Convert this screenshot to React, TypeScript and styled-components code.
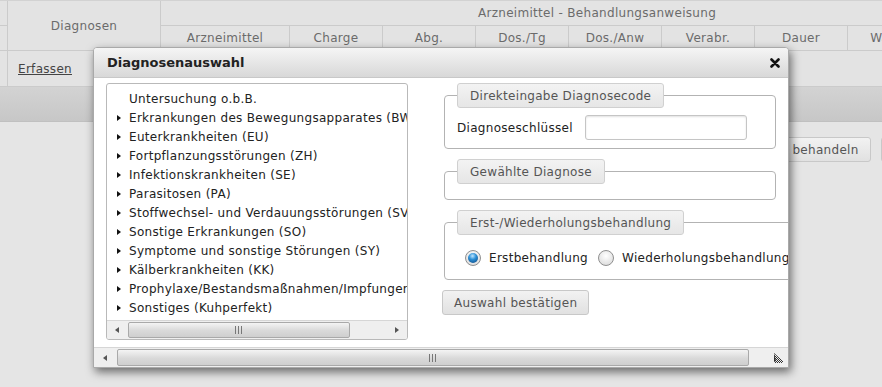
import React from "react";
import styled, { createGlobalStyle } from "styled-components";

const GlobalStyle = createGlobalStyle`
  html, body {
    margin: 0;
    padding: 0;
  }
  body {
    background: #e5e5e5;
    font-family: "DejaVu Sans", Verdana, sans-serif;
    font-size: 12px;
    letter-spacing: 0.3px;
    overflow: hidden;
  }
  * {
    box-sizing: border-box;
  }
`;

const Page = styled.div`
  position: relative;
  width: 882px;
  height: 387px;
  overflow: hidden;
`;

const HeaderGrid = styled.div`
  display: grid;
  grid-template-columns: 8px 153px 129px repeat(8, 93px);
  grid-template-rows: 25px 25px 36px;
  width: max-content;
  background: #e3e3e3;
  border-top: 1px solid #d2d2d2;
  color: #6b6b6b;
`;

const HeadCell = styled.div<{ $col: string; $row: string; $noRight?: boolean }>`
  grid-column: ${(p) => p.$col};
  grid-row: ${(p) => p.$row};
  display: flex;
  align-items: center;
  justify-content: center;
  border-right: ${(p) => (p.$noRight ? "none" : "1px solid #cbcbcb")};
  border-bottom: 1px solid #cbcbcb;
  white-space: nowrap;
`;

const LinkCell = styled(HeadCell)`
  justify-content: flex-start;
  padding-left: 10px;
`;

const Link = styled.a`
  color: #444;
  text-decoration: underline;
  cursor: pointer;
`;

const Toolbar = styled.div`
  height: 35px;
  background: linear-gradient(#d3d3d3, #c7c7c7);
  border-bottom: 1px solid #c0c0c0;
`;

const ActionBar = styled.div`
  display: flex;
  justify-content: flex-end;
  gap: 10px;
  padding-top: 15px;
  margin-right: -90px;
`;

const Button = styled.button`
  height: 25px;
  padding: 0 11px;
  border: 1px solid #c8c8c8;
  border-radius: 3px;
  background: linear-gradient(#f2f2f2, #e1e1e1);
  color: #555;
  font-family: inherit;
  font-size: 12px;
  letter-spacing: 0.3px;
  white-space: nowrap;
  cursor: pointer;
`;

const Dialog = styled.div`
  position: absolute;
  left: 93px;
  top: 47px;
  width: 696px;
  height: 321px;
  display: flex;
  flex-direction: column;
  background: #fff;
  border: 1px solid #a9a9a9;
  border-radius: 4px 4px 0 0;
  box-shadow: 2px 4px 10px rgba(0, 0, 0, 0.55);
  overflow: hidden;
`;

const TitleBar = styled.div`
  height: 30px;
  flex: none;
  display: flex;
  align-items: center;
  justify-content: space-between;
  padding: 0 8px 0 13px;
  background: linear-gradient(#f5f5f5, #d8d8d8);
  border-bottom: 1px solid #c8c8c8;
  color: #222;
  font-size: 13px;
  font-weight: bold;
  letter-spacing: 0;
`;

const CloseButton = styled.span`
  display: flex;
  cursor: pointer;
`;

const Body = styled.div`
  flex: 1;
  overflow: hidden;
`;

const Content = styled.div`
  display: flex;
  align-items: flex-start;
  gap: 36px;
  width: max-content;
  padding: 5px 0 0 12px;
`;

const TreeBox = styled.div`
  width: 302px;
  height: 257px;
  display: flex;
  flex-direction: column;
  border: 1px solid #b9b9b9;
  border-radius: 3px;
  overflow: hidden;
`;

const TreeList = styled.ul`
  flex: 1;
  margin: 0;
  padding: 6px 0 0;
  list-style: none;
  overflow: hidden;
`;

const TreeItem = styled.li<{ $branch?: boolean }>`
  position: relative;
  height: 19px;
  line-height: 19px;
  padding-left: 22px;
  color: #222;
  white-space: nowrap;

  &::before {
    content: "";
    display: ${(p) => (p.$branch ? "block" : "none")};
    position: absolute;
    left: 10px;
    top: 6px;
    border-top: 3.5px solid transparent;
    border-bottom: 3.5px solid transparent;
    border-left: 4px solid #111;
  }
`;

const ScrollBar = styled.div<{ $height: number }>`
  flex: none;
  height: ${(p) => p.$height}px;
  display: flex;
  align-items: stretch;
  background: #efefef;
  border-top: 1px solid #d6d6d6;
`;

const ArrowBtn = styled.span<{ $dir: "left" | "right"; $width: number }>`
  flex: none;
  width: ${(p) => p.$width}px;
  display: flex;
  align-items: center;
  justify-content: center;

  &::before {
    content: "";
    border-top: 3.5px solid transparent;
    border-bottom: 3.5px solid transparent;
    ${(p) =>
      p.$dir === "left"
        ? "border-right: 4px solid #555;"
        : "border-left: 4px solid #555;"}
  }
`;

const Track = styled.div`
  flex: 1;
  display: flex;
  align-items: stretch;
  padding: 1px 0;
`;

const Thumb = styled.div<{ $offset: number; $width: number }>`
  margin-left: ${(p) => p.$offset}px;
  width: ${(p) => p.$width}px;
  display: flex;
  align-items: center;
  justify-content: center;
  border: 1px solid #a9a9a9;
  border-radius: 2px;
  background: linear-gradient(#f4f4f4, #d9d9d9 55%, #cfcfcf);
`;

const Grip = styled.span`
  width: 8px;
  height: 8px;
  background: repeating-linear-gradient(
    90deg,
    #777 0,
    #777 1px,
    transparent 1px,
    transparent 3px
  );
`;

const Corner = styled.span`
  flex: none;
  width: 20px;
  display: flex;
  align-items: center;
  justify-content: center;
  background: #efefef;
`;

const RightColumn = styled.div`
  display: flex;
  flex-direction: column;
  align-items: flex-start;
  gap: 10px;
`;

const Group = styled.fieldset<{ $width?: number }>`
  margin: 0;
  width: ${(p) => (p.$width ? `${p.$width}px` : "auto")};
  min-height: 0;
  padding: 7px 12px 8px;
  border: 1px solid #b3b3b3;
  border-radius: 4px;
`;

const Legend = styled.legend`
  height: 25px;
  padding: 0 12px;
  display: flex;
  align-items: center;
  border: 1px solid #d0d0d0;
  border-radius: 3px;
  background: linear-gradient(#f3f3f3, #e6e6e6);
  color: #555;
  white-space: nowrap;
`;

const FieldRow = styled.div`
  display: flex;
  align-items: center;
  gap: 12px;
  color: #222;
`;

const TextInput = styled.input`
  width: 162px;
  height: 25px;
  border: 1px solid #c5c5c5;
  border-radius: 3px;
  box-shadow: inset 0 1px 2px rgba(0, 0, 0, 0.12);
  font-family: inherit;
`;

const EmptyBody = styled.div`
  height: 0;
`;

const RadioRow = styled.div`
  display: flex;
  align-items: center;
  padding: 8px 0 5px 8px;
  color: #222;
  white-space: nowrap;
`;

const RadioLabel = styled.label`
  display: flex;
  align-items: center;
  gap: 8px;
  margin-right: 10px;
`;

const RadioDot = styled.span<{ $checked?: boolean }>`
  width: 16px;
  height: 16px;
  border-radius: 50%;
  border: 1px solid #8f8f8f;
  display: flex;
  align-items: center;
  justify-content: center;
  background: radial-gradient(circle at 50% 35%, #ffffff, #d6d6d6);

  &::after {
    content: "";
    display: ${(p) => (p.$checked ? "block" : "none")};
    width: 10px;
    height: 10px;
    border-radius: 50%;
    background: radial-gradient(circle at 45% 30%, #bfe6ff 0, #2b8fd6 40%, #0b3f78 100%);
  }
`;

const ConfirmButton = styled(Button)`
  margin-left: -2px;
`;

const diagnoses: { label: string; branch: boolean }[] = [
  { label: "Untersuchung o.b.B.", branch: false },
  { label: "Erkrankungen des Bewegungsapparates (BW)", branch: true },
  { label: "Euterkrankheiten (EU)", branch: true },
  { label: "Fortpflanzungsstörungen (ZH)", branch: true },
  { label: "Infektionskrankheiten (SE)", branch: true },
  { label: "Parasitosen (PA)", branch: true },
  { label: "Stoffwechsel- und Verdauungsstörungen (SV)", branch: true },
  { label: "Sonstige Erkrankungen (SO)", branch: true },
  { label: "Symptome und sonstige Störungen (SY)", branch: true },
  { label: "Kälberkrankheiten (KK)", branch: true },
  { label: "Prophylaxe/Bestandsmaßnahmen/Impfungen (PR)", branch: true },
  { label: "Sonstiges (Kuhperfekt)", branch: true },
];

const columns = ["Arzneimittel", "Charge", "Abg.", "Dos./Tg", "Dos./Anw", "Verabr.", "Dauer", "Wartez.", "Bemerkung"];

const CloseIcon = () => (
  <svg width="10" height="10" viewBox="0 0 10 10">
    <path d="M1.5 1.5 L8.5 8.5 M8.5 1.5 L1.5 8.5" stroke="#111" strokeWidth="2.6" strokeLinecap="round" />
  </svg>
);

const ResizeIcon = () => (
  <svg width="11" height="12" viewBox="0 0 11 12">
    <defs>
      <pattern id="dots" width="2" height="2" patternUnits="userSpaceOnUse">
        <rect width="1" height="1" fill="#333" />
        <rect x="1" y="1" width="1" height="1" fill="#333" />
      </pattern>
    </defs>
    <path d="M1 1 L1 10 L3 9 Z" fill="#333" />
    <path d="M1 1 L10 9 L10 11 L2 11 Z" fill="url(#dots)" />
  </svg>
);

const App = () => {
  return (
    <Page>
      <GlobalStyle />
      <HeaderGrid>
        <HeadCell $col="1" $row="1" />
        <HeadCell $col="1" $row="2" />
        <HeadCell $col="1" $row="3" />
        <HeadCell $col="2" $row="1 / span 2">Diagnosen</HeadCell>
        <HeadCell $col="3 / span 9" $row="1">Arzneimittel - Behandlungsanweisung</HeadCell>
        {columns.map((c, i) => (
          <HeadCell key={c} $col={String(i + 3)} $row="2">
            {c}
          </HeadCell>
        ))}
        <LinkCell $col="2" $row="3">
          <Link>Erfassen</Link>
        </LinkCell>
        <HeadCell $col="3 / span 9" $row="3" $noRight />
      </HeaderGrid>
      <Toolbar />
      <ActionBar>
        <Button>Tier behandeln</Button>
        <Button>Abbrechen</Button>
      </ActionBar>

      <Dialog>
        <TitleBar>
          Diagnosenauswahl
          <CloseButton>
            <CloseIcon />
          </CloseButton>
        </TitleBar>
        <Body>
          <Content>
            <TreeBox>
              <TreeList>
                {diagnoses.map((d) => (
                  <TreeItem key={d.label} $branch={d.branch}>
                    {d.label}
                  </TreeItem>
                ))}
              </TreeList>
              <ScrollBar $height={19}>
                <ArrowBtn $dir="left" $width={20} />
                <Track>
                  <Thumb $offset={1} $width={222}>
                    <Grip />
                  </Thumb>
                </Track>
                <ArrowBtn $dir="right" $width={20} />
              </ScrollBar>
            </TreeBox>

            <RightColumn>
              <Group $width={332}>
                <Legend>Direkteingabe Diagnosecode</Legend>
                <FieldRow>
                  Diagnoseschlüssel
                  <TextInput />
                </FieldRow>
              </Group>
              <Group $width={332}>
                <Legend>Gewählte Diagnose</Legend>
                <EmptyBody />
              </Group>
              <Group>
                <Legend>Erst-/Wiederholungsbehandlung</Legend>
                <RadioRow>
                  <RadioLabel>
                    <RadioDot $checked />
                    Erstbehandlung
                  </RadioLabel>
                  <RadioLabel>
                    <RadioDot />
                    Wiederholungsbehandlung
                  </RadioLabel>
                </RadioRow>
              </Group>
              <ConfirmButton>Auswahl bestätigen</ConfirmButton>
            </RightColumn>
          </Content>
        </Body>
        <ScrollBar $height={20}>
          <ArrowBtn $dir="left" $width={22} />
          <Track>
            <Thumb $offset={1} $width={632}>
              <Grip />
            </Thumb>
          </Track>
          <Corner>
            <ResizeIcon />
          </Corner>
        </ScrollBar>
      </Dialog>
    </Page>
  );
};

export default App;
